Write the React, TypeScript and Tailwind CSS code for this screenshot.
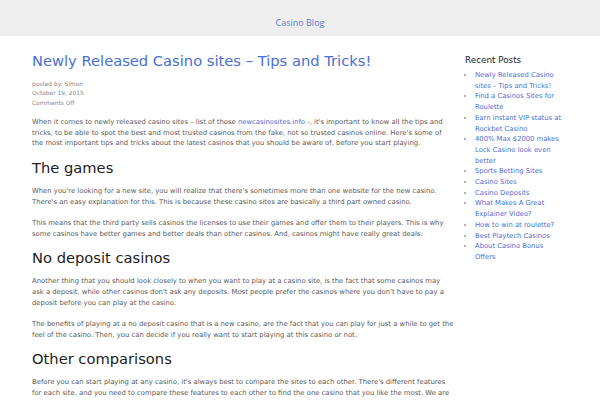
import React from "react";

const posts = [
  "Newly Released Casino sites – Tips and Tricks!",
  "Find a Casinos Sites for Roulette",
  "Earn instant VIP status at Rockbet Casino",
  "400% Max $2000 makes Lock Casino look even better",
  "Sports Betting Sites",
  "Casino Sites",
  "Casino Deposits",
  "What Makes A Great Explainer Video?",
  "How to win at roulette?",
  "Best Playtech Casinos",
  "About Casino Bonus Offers",
];

const P = ({ children }: { children: React.ReactNode }) => (
  <p className="text-[6.85px] leading-[10.6px] text-[#5a5a5a] mb-[11px]">{children}</p>
);

const H = ({ children }: { children: React.ReactNode }) => (
  <h2 className="text-[14.7px] leading-[16px] text-[#222] mb-[10px]">{children}</h2>
);

const App = () => {
  return (
    <div className="w-[600px] h-[400px] overflow-hidden bg-white" style={{ fontFamily: '"DejaVu Sans", sans-serif' }}>
      {/* header */}
      <div className="h-[36px] bg-[#eeeeee] flex items-center justify-center">
        <span className="text-[9px] text-[#5b7bd5] mt-[9px]" style={{ fontFamily: '"Open Sans", sans-serif' }}>
          Casino Blog
        </span>
      </div>

      <div className="flex px-[32px] pt-[17px]">
        {/* main */}
        <div className="w-[422px] shrink-0">
          <h1 className="text-[14.7px] leading-[16px] text-[#4a6fd6]">
            Newly Released Casino sites – Tips and Tricks!
          </h1>
          <div className="mt-[11px] mb-[9px] text-[5.9px] leading-[9.4px] text-[#888]">
            <div>posted by: Simon</div>
            <div>October 19, 2015</div>
            <div>Comments Off</div>
          </div>

          <P>
            When it comes to newly released casino sites – list of those{" "}
            <span className="text-[#4a6fd6]">newcasinosites.info</span> -, it's important to know all the tips and
            tricks, to be able to spot the best and most trusted casinos from the fake, not so trusted casinos online.
            Here's some of the most important tips and tricks about the latest casinos that you should be aware of,
            before you start playing.
          </P>

          <H>The games</H>
          <P>
            When you're looking for a new site, you will realize that there's sometimes more than one website for the
            new casino. There's an easy explanation for this. This is because these casino sites are basically a third
            part owned casino.
          </P>
          <P>
            This means that the third party sells casinos the licenses to use their games and offer them to their
            players. This is why some casinos have better games and better deals than other casinos. And, casinos might
            have really great deals.
          </P>

          <H>No deposit casinos</H>
          <P>
            Another thing that you should look closely to when you want to play at a casino site, is the fact that some
            casinos may ask a deposit, while other casinos don't ask any deposits. Most people prefer the casinos where
            you don't have to pay a deposit before you can play at the casino.
          </P>
          <P>
            The benefits of playing at a no deposit casino that is a new casino, are the fact that you can play for
            just a while to get the feel of the casino. Then, you can decide if you really want to start playing at
            this casino or not.
          </P>

          <H>Other comparisons</H>
          <P>
            Before you can start playing at any casino, it's always best to compare the sites to each other. There's
            different features for each site, and you need to compare these features to each other to find the one
            casino that you like the most. We are talking here about the different bonuses, visa acceptances and
            payout methods.
          </P>
        </div>

        {/* sidebar */}
        <div className="ml-[11px] w-[110px] shrink-0">
          <h3 className="text-[8.8px] leading-[12px] text-[#222] mt-[1px] mb-[4px]">Recent Posts</h3>
          <ul className="pl-[10px] list-disc marker:text-[#999] text-[6.8px] leading-[10.7px] text-[#4a6fd6]">
            {posts.map((p) => (
              <li key={p} className="w-[88px]">
                {p}
              </li>
            ))}
          </ul>
        </div>
      </div>
    </div>
  );
};

export default App;
